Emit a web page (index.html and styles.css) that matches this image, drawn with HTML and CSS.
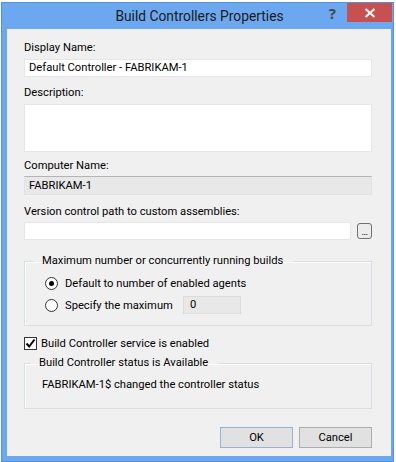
FILE: index.html
```html
<!DOCTYPE html>
<html lang="en">
<head>
    <meta charset="UTF-8">
    <title>Build Controllers Properties</title>
    <link rel="stylesheet" href="styles.css">
</head>
<body>
    <div class="window">
        <div class="titlebar">
            <span></span>
            <span class="title">Build Controllers Properties</span>
            <div class="caption-buttons">
                <span class="help">?</span>
                <span class="close">
                    <svg width="12" height="10" viewBox="0 0 12 10"><path d="M1.5 1 L10.5 9 M10.5 1 L1.5 9" stroke="#fff" stroke-width="2"/></svg>
                </span>
            </div>
        </div>

        <div class="content">
            <div class="label">Display Name:</div>
            <div class="field">Default Controller - FABRIKAM-1</div>

            <div class="label desc-label">Description:</div>
            <div class="field area"></div>

            <div class="label computer-label">Computer Name:</div>
            <div class="field readonly">FABRIKAM-1</div>

            <div class="label path-label">Version control path to custom assemblies:</div>
            <div class="path-row">
                <div class="field path"></div>
                <span class="browse">...</span>
            </div>

            <fieldset class="group builds">
                <legend>Maximum number or concurrently running builds</legend>
                <div class="radio-row"><span class="radio checked"></span>Default to number of enabled agents</div>
                <div class="radio-row second"><span class="radio"></span>Specify the maximum<span class="spin">0</span></div>
            </fieldset>

            <div class="check-row">
                <span class="check">
                    <svg width="11" height="11" viewBox="0 0 11 11"><path d="M1.5 5.5 L4.2 8.5 L9.5 1.5" fill="none" stroke="#000" stroke-width="2"/></svg>
                </span>
                Build Controller service is enabled
            </div>

            <fieldset class="group status">
                <legend>Build Controller status is Available</legend>
                <p>FABRIKAM-1$ changed the controller status</p>
            </fieldset>

            <div class="buttons">
                <span class="btn default">OK</span>
                <span class="btn">Cancel</span>
            </div>
        </div>
    </div>
</body>
</html>
```

FILE: styles.css
```css
* {
    margin: 0;
    padding: 0;
    box-sizing: border-box;
}

body {
    background: #fff;
    font-family: Roboto, 'Noto Sans', sans-serif;
    font-size: 11.2px;
    color: #000;
}

.window {
    width: 393px;
    height: 460px;
    margin: 2px 0 0 1px;
    background: #6ca8ef;
    border: 1px solid #5592dc;
    display: flex;
    flex-direction: column;
}

.titlebar {
    height: 26px;
    display: grid;
    grid-template-columns: 1fr auto 1fr;
    align-items: start;
}

.title {
    font-size: 13.8px;
    line-height: 26px;
    color: #1a1a1a;
    margin-left: 4px;
}

.caption-buttons {
    display: flex;
    justify-content: flex-end;
    align-items: flex-start;
}

.help {
    font-family: 'Noto Sans', sans-serif;
    font-size: 15px;
    font-weight: 700;
    line-height: 20px;
    color: #404850;
    margin-right: 11px;
}

.close {
    width: 45px;
    height: 19px;
    background: #c75050;
    display: flex;
    align-items: center;
    justify-content: center;
    margin-right: 1px;
}

.content {
    flex: 1;
    background: #f0f0f0;
    margin: 0 2px 5px 5px;
    padding: 11px 19px 8px 17px;
    display: flex;
    flex-direction: column;
}

.label {
    line-height: 16px;
}

.desc-label {
    margin-top: 8px;
}

.computer-label {
    margin-top: 6px;
}

.path-label {
    margin-top: 9px;
}

.field {
    background: #fff;
    border: 1px solid #e6e6e6;
    height: 18px;
    line-height: 16px;
    padding-left: 4px;
    margin-top: 3px;
}

.field.area {
    height: 48px;
}

.field.readonly {
    background: #e8e8e8;
    border-color: #e2e2e2;
    border-top-color: #b4b4b4;
    height: 19px;
    line-height: 17px;
    margin-top: 2px;
}

.path-row {
    display: flex;
    align-items: center;
    gap: 6px;
    margin-top: 2px;
}

.field.path {
    flex: 1;
    margin-top: 0;
}

.browse {
    width: 15px;
    height: 16px;
    border: 1px solid #707070;
    border-radius: 3px;
    background: #ececec;
    font-family: 'Liberation Sans', sans-serif;
    font-size: 9px;
    line-height: 16px;
    text-align: center;
    letter-spacing: -0.5px;
}

.group {
    border: 1px solid #d6dfe6;
    box-shadow: inset 1px 1px 0 #fff;
}

.group legend {
    line-height: 16px;
    margin-left: -11px;
    padding: 0 10px 0 8px;
}

.builds {
    margin-top: 13px;
    padding: 5px 0 11px 20px;
}

.radio-row {
    display: flex;
    align-items: center;
    height: 18px;
}

.radio-row.second {
    margin-top: 4px;
}

.radio {
    width: 13px;
    height: 13px;
    border: 1px solid #333;
    border-radius: 50%;
    background: #fff;
    margin-right: 7px;
    display: flex;
    align-items: center;
    justify-content: center;
}

.radio.checked::after {
    content: "";
    width: 5px;
    height: 5px;
    border-radius: 50%;
    background: #000;
}

.spin {
    width: 58px;
    height: 18px;
    background: #e8e8e8;
    border: 1px solid #dcdcdc;
    line-height: 16px;
    padding-left: 6px;
    margin-left: 10px;
}

.check-row {
    display: flex;
    align-items: center;
    height: 16px;
    margin-top: 9px;
}

.check {
    width: 13px;
    height: 13px;
    border: 1px solid #333;
    background: #fff;
    margin-right: 4px;
    display: flex;
    align-items: center;
    justify-content: center;
}

.status {
    margin-top: 4px;
    padding: 6px 0 15px 17px;
}

.status p {
    line-height: 16px;
}

.buttons {
    display: flex;
    justify-content: flex-end;
    gap: 6px;
    margin-top: 18px;
}

.btn {
    width: 73px;
    height: 21px;
    background: #e1e1e1;
    border: 1px solid #adadad;
    text-align: center;
    line-height: 19px;
}

.btn.default {
    border-color: #98b2cf;
}
```
